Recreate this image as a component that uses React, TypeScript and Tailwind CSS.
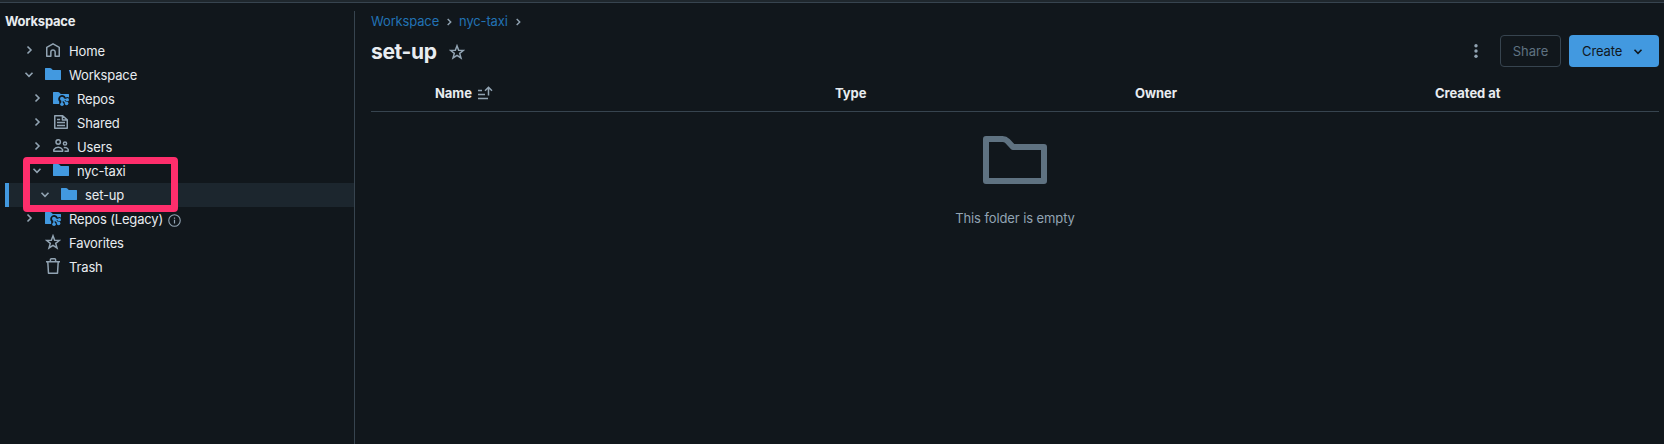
import React from "react";

type IconProps = { className?: string };

function Svg({ className = "size-4", children }: IconProps & { children: React.ReactNode }) {
  return (
    <svg viewBox="0 0 16 16" fill="none" className={`shrink-0 ${className}`}>
      {children}
    </svg>
  );
}

const ChevronRight = ({ className }: IconProps) => (
  <Svg className={className}>
    <path d="m6.5 4.5 3.5 3.5-3.5 3.5" stroke="currentColor" strokeWidth="1.6" />
  </Svg>
);
const ChevronDown = ({ className }: IconProps) => (
  <Svg className={className}>
    <path d="m4.5 6.8 3.5 3.5 3.5-3.5" stroke="currentColor" strokeWidth="1.6" />
  </Svg>
);
const HomeIcon = () => (
  <Svg>
    <path d="M1.75 5.3 8 1.8l6.25 3.5v8.95h-4.1V10.1a2.15 2.15 0 0 0-4.3 0v4.15h-4.1z" stroke="currentColor" strokeWidth="1.5" strokeLinejoin="round" />
  </Svg>
);
const FolderIcon = () => (
  <Svg className="size-4 text-[#4299e0]">
    <path d="M.4 2a.4.4 0 0 0-.4.4v11.2c0 .22.18.4.4.4h15.2a.4.4 0 0 0 .4-.4V4.4a.4.4 0 0 0-.4-.4H7.8L6.3 2.5A1.75 1.75 0 0 0 5.1 2z" fill="currentColor" />
  </Svg>
);
const RepoFolderIcon = () => (
  <Svg className="size-4 text-[#4299e0]">
    <path d="M.4 2a.4.4 0 0 0-.4.4v11.2c0 .22.18.4.4.4h5.8v-2.4a3.9 3.9 0 1 1 6.5-4.1q.8-.5 1.8-.5.8 0 1.5.4V4.4a.4.4 0 0 0-.4-.4H7.8L6.3 2.5A1.75 1.75 0 0 0 5.1 2z" fill="currentColor" />
    <path d="M9 9v5M9 8.7l5.3 1.3M9 9l4.4 4.3" stroke="currentColor" strokeWidth="1.4" />
    <circle cx="9" cy="8.7" r="2" fill="currentColor" />
    <circle cx="9" cy="14.2" r="1.8" fill="currentColor" />
    <circle cx="14.4" cy="9.7" r="1.6" fill="currentColor" />
    <circle cx="13.6" cy="13.4" r="1.8" fill="currentColor" />
  </Svg>
);
const SharedIcon = () => (
  <Svg>
    <path d="M1.75 1.75h7.9l4.6 4.1v8.4H1.75zM9.4 1.9v4.2h4.7M4 5.6h3.2M4 8.6h8M4 11.5h8" stroke="currentColor" strokeWidth="1.5" strokeLinejoin="round" />
  </Svg>
);
const UsersIcon = () => (
  <Svg>
    <circle cx="5.2" cy="4" r="2.2" stroke="currentColor" strokeWidth="1.5" />
    <circle cx="12" cy="5.5" r="1.6" stroke="currentColor" strokeWidth="1.5" />
    <path d="M.8 13.2v-1.6c1-1.6 2.6-2.4 4.4-2.4s3.4.8 4.4 2.4v1.6zM10.8 9.7c1.8-.3 3.4.3 4.4 1.7v1.8h-3.7" stroke="currentColor" strokeWidth="1.5" strokeLinejoin="round" />
  </Svg>
);
const StarIcon = ({ className }: IconProps) => (
  <Svg className={className}>
    <path d="m8 1.8 1.65 4.35 4.85.2-3.8 3 1.3 4.65L8 11.35 4 14l1.3-4.65-3.8-3 4.85-.2z" stroke="currentColor" strokeWidth="1.5" />
  </Svg>
);
const TrashIcon = () => (
  <Svg>
    <path d="M1 3.75h14M5.4 3.5V1.75a.9.9 0 0 1 .9-.9h3.4a.9.9 0 0 1 .9.9V3.5M2.8 4l.7 11.2h9L13.2 4" stroke="currentColor" strokeWidth="1.5" strokeLinejoin="round" />
  </Svg>
);
const InfoIcon = () => (
  <svg viewBox="0 0 12 12" fill="none" className="mt-[3px] ml-[5px] size-[13px] shrink-0 text-[#92a4b3]">
    <circle cx="6" cy="6" r="5.3" stroke="currentColor" strokeWidth="1" />
    <path d="M6 5.3v3.5M6 3.2v1.2" stroke="currentColor" strokeWidth="1.1" />
  </svg>
);

type Row = {
  label: string;
  indent: string;
  icon: React.ReactNode;
  state: "open" | "closed" | "leaf";
  selected?: boolean;
  info?: boolean;
};

const rows: Row[] = [
  { label: "Home", indent: "pl-4", icon: <HomeIcon />, state: "closed" },
  { label: "Workspace", indent: "pl-4", icon: <FolderIcon />, state: "open" },
  { label: "Repos", indent: "pl-6", icon: <RepoFolderIcon />, state: "closed" },
  { label: "Shared", indent: "pl-6", icon: <SharedIcon />, state: "closed" },
  { label: "Users", indent: "pl-6", icon: <UsersIcon />, state: "closed" },
  { label: "nyc-taxi", indent: "pl-6", icon: <FolderIcon />, state: "open" },
  { label: "set-up", indent: "pl-8", icon: <FolderIcon />, state: "open", selected: true },
  { label: "Repos (Legacy)", indent: "pl-4", icon: <RepoFolderIcon />, state: "closed", info: true },
  { label: "Favorites", indent: "pl-4", icon: <StarIcon />, state: "leaf" },
  { label: "Trash", indent: "pl-4", icon: <TrashIcon />, state: "leaf" },
];

function TreeRow({ row }: { row: Row }) {
  return (
    <li className={`flex h-6 items-center ${row.indent} ${row.selected ? "bg-[#1c262e] shadow-[inset_4px_0_0_#4299e0]" : ""}`}>
      <span className="mb-0.5 flex w-6 shrink-0 text-[#92a4b3]">
        {row.state === "closed" && <ChevronRight />}
        {row.state === "open" && <ChevronDown />}
      </span>
      <span className="mr-2 mb-0.5 flex text-[#92a4b3]">{row.icon}</span>
      <span className="whitespace-nowrap">{row.label}</span>
      {row.info && <InfoIcon />}
    </li>
  );
}

export default function App() {
  return (
    <div className="flex h-[444px] w-[1664px] flex-col overflow-hidden bg-[#11171c] font-['Inter',sans-serif] text-[13px] leading-5 tracking-[-0.15px] text-[#e8ecf0]">
      <div className="h-[3px] shrink-0 border-b border-[#37444f] bg-[#1f272d]" />
      <div className="flex min-h-0 flex-1 pt-2">
        <aside className="relative w-[355px] shrink-0 border-r border-[#37444f] pl-[5px]">
          <h2 className="h-7 font-bold tracking-[-0.25px]">Workspace</h2>
          <ul>
            {rows.map((row) => (
              <TreeRow key={row.label} row={row} />
            ))}
          </ul>
          <div className="absolute top-[146px] left-[23px] h-[55px] w-[155px] rounded-[4px] border-[7px] border-[#ff2e6c]" />
        </aside>
        <main className="min-w-0 flex-1 pr-[5px] pl-4">
          <nav className="flex h-5 items-center text-[#2272b4]">
            <span>Workspace</span>
            <ChevronRight className="mx-[3px] mt-0.5 size-[14px] text-[#92a4b3]" />
            <span>nyc-taxi</span>
            <ChevronRight className="mx-[3px] mt-0.5 size-[14px] text-[#92a4b3]" />
          </nav>
          <header className="mt-1 flex h-8 items-center">
            <h1 className="mt-0.5 text-[21px] leading-7 font-bold tracking-[-0.35px]">set-up</h1>
            <StarIcon className="mt-0.5 ml-3 size-4 text-[#92a4b3]" />
            <svg viewBox="0 0 16 16" fill="currentColor" className="mr-4 ml-auto size-4 text-[#92a4b3]">
              <circle cx="8" cy="2.7" r="1.7" />
              <circle cx="8" cy="8" r="1.7" />
              <circle cx="8" cy="13.3" r="1.7" />
            </svg>
            <button className="h-8 w-[61px] rounded-[4px] border border-[#37444f] tracking-normal text-[#5f7281]">Share</button>
            <button className="ml-2 flex h-8 w-[90px] items-center rounded-[4px] bg-[#4299e0] pl-[13px] tracking-[-0.1px] text-[#11171c]">
              Create
              <ChevronDown className="ml-2 size-4" />
            </button>
          </header>
          <div className="mt-2 grid h-[37px] grid-cols-[456px_300px_300px_1fr] items-center border-b border-[#37444f] font-bold tracking-[-0.05px]">
            <span className="flex items-center pl-16">
              Name
              <svg viewBox="0 0 16 16" fill="none" className="ml-[5px] size-4 text-[#92a4b3]">
                <path d="M1 5.5h4M1 9.5h7M1 13.5h10M11.5 10.5V2.5M8 5.8l3.5-3.5L15 5.8" stroke="currentColor" strokeWidth="1.5" />
              </svg>
            </span>
            <span className="pl-2">Type</span>
            <span className="pl-2">Owner</span>
            <span className="pl-2">Created at</span>
          </div>
          <div className="flex flex-col items-center pt-4 tracking-[-0.1px] text-[#92a4b3]">
            <svg viewBox="0 0 64 64" fill="none" className="size-16 text-[#5f7281]">
              <path d="M3 11h16.5c2 0 3.5.6 4.9 2l5.6 6h31v34H3z" stroke="currentColor" strokeWidth="6" strokeLinejoin="round" />
            </svg>
            <p className="mt-4">This folder is empty</p>
          </div>
        </main>
      </div>
    </div>
  );
}
